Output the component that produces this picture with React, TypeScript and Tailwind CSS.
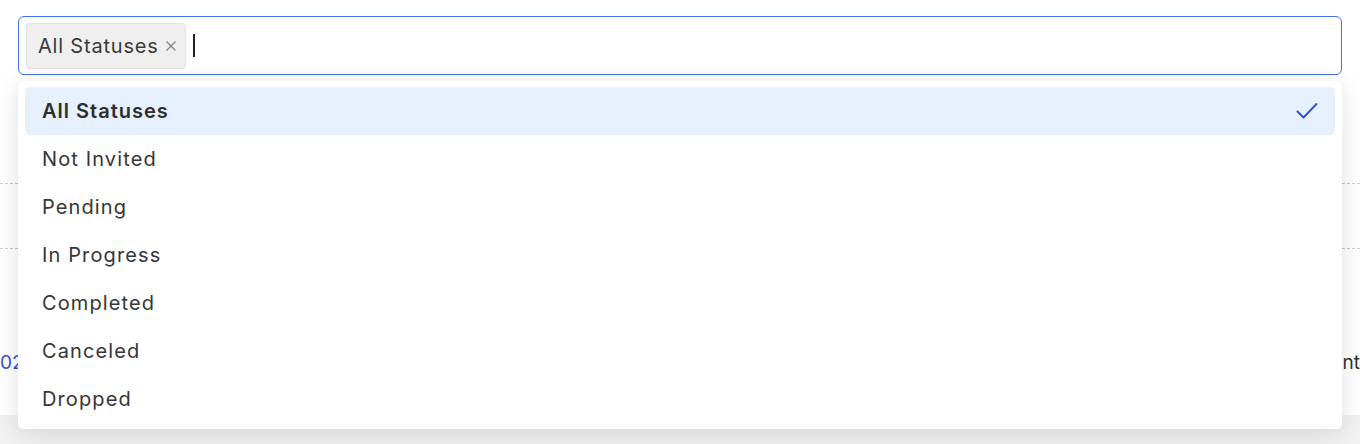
import React, { useState } from "react";

const statuses = [
  "All Statuses",
  "Not Invited",
  "Pending",
  "In Progress",
  "Completed",
  "Canceled",
  "Dropped",
];

const CheckIcon: React.FC = () => (
  <svg width="22" height="18" viewBox="0 0 22 18" fill="none">
    <path
      d="M1.5 9.5 L7.5 15.5 L20.5 2"
      stroke="#2f55d4"
      strokeWidth="2"
      strokeLinecap="round"
      strokeLinejoin="round"
    />
  </svg>
);

const App: React.FC = () => {
  const [selected] = useState<string>("All Statuses");

  return (
    <div
      className="relative h-[444px] w-[1360px] overflow-hidden bg-[#f1f1f2] text-[#333] tracking-[0.05em]"
      style={{ fontFamily: "Inter, 'Noto Sans', sans-serif" }}
    >
      {/* page card behind the menu */}
      <div className="flex h-[415px] flex-col bg-white">
        <div className="px-[18px] pt-4">
          <div className="flex h-[59px] items-center gap-[7px] rounded-[6px] border border-[#3f73ef] bg-white px-[7px]">
            <div className="flex h-[46px] items-center gap-[6px] rounded-[4px] border border-[#e2e2e2] bg-[#efefef] pl-[11px] pr-[8px]">
              <span className="pt-[1px] text-[20px] text-[#3a3a3a]">All Statuses</span>
              <svg width="12" height="12" viewBox="0 0 12 12">
                <path
                  d="M1.5 1.5 L10.5 10.5 M10.5 1.5 L1.5 10.5"
                  stroke="#888"
                  strokeWidth="1.4"
                />
              </svg>
            </div>
            <div className="h-[23px] w-[2px] bg-[#222]" />
          </div>
        </div>

        {/* table rows, mostly hidden */}
        <div className="mt-[108px] border-t border-dashed border-[#c8c8c8]" />
        <div className="mt-[64px] border-t border-dashed border-[#c8c8c8]" />
        <div className="mt-[100px] flex items-center justify-between whitespace-nowrap text-[19px] tracking-normal">
          <span className="text-[#2f55d4]">02</span>
          <span className="text-[#333]">nt</span>
        </div>
      </div>

      {/* dropdown menu */}
      <div className="absolute left-[18px] right-[18px] top-[81px] rounded-[6px] bg-white px-[7px] py-[6px] tracking-[0.07em] shadow-[0_4px_24px_rgba(0,0,0,0.12)]">
        {statuses.map((s) => (
          <div
            key={s}
            className={
              s === selected
                ? "flex h-[48px] items-center justify-between rounded-[5px] bg-[#e7f1fd] pl-[17px] pr-[17px] text-[20px] font-semibold tracking-[0.05em] text-[#2e2e2e]"
                : "flex h-[48px] items-center pl-[17px] text-[20px] text-[#363636]"
            }
          >
            <span>{s}</span>
            {s === selected && <CheckIcon />}
          </div>
        ))}
      </div>
    </div>
  );
};

export default App;
